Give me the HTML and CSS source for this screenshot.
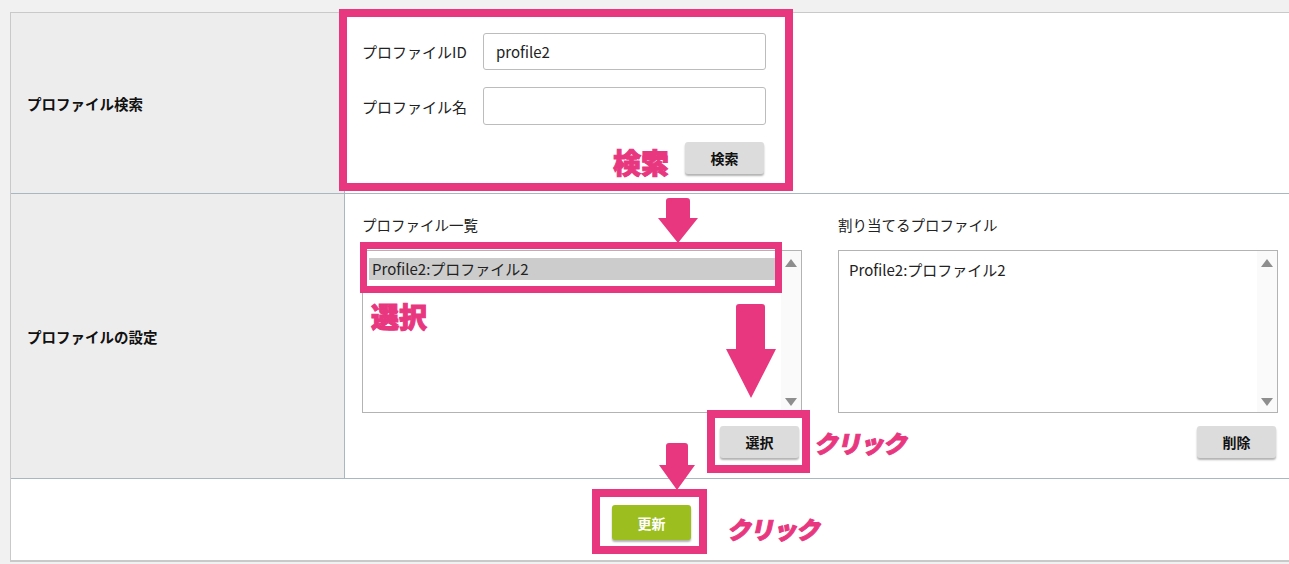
FILE: index.html
```html
<!DOCTYPE html>
<html lang="ja">

<head>
    <meta charset="UTF-8">
    <meta name="viewport" content="width=device-width, initial-scale=1.0">
    <title>プロファイルの設定</title>
    <link rel="stylesheet" href="styles.css">
</head>

<body>
    <div class="form">
        <!-- プロファイル検索 -->
        <div class="row row-search">
            <div class="th">プロファイル検索</div>
            <div class="td">
                <div class="field">
                    <label>プロファイルID</label>
                    <div class="input">profile2</div>
                </div>
                <div class="field">
                    <label>プロファイル名</label>
                    <div class="input"></div>
                </div>
                <div class="actions">
                    <button class="btn">検索</button>
                </div>
            </div>
        </div>
        <!-- プロファイルの設定 -->
        <div class="row row-setting">
            <div class="th">プロファイルの設定</div>
            <div class="td lists">
                <div class="col">
                    <div class="caption">プロファイル一覧</div>
                    <div class="listbox">
                        <ul class="items">
                            <li class="selected">Profile2:プロファイル2</li>
                        </ul>
                        <div class="scroll"><span class="up"></span><span class="down"></span></div>
                    </div>
                    <div class="actions">
                        <button class="btn">選択</button>
                    </div>
                </div>
                <div class="col">
                    <div class="caption">割り当てるプロファイル</div>
                    <div class="listbox">
                        <ul class="items">
                            <li>Profile2:プロファイル2</li>
                        </ul>
                        <div class="scroll"><span class="up"></span><span class="down"></span></div>
                    </div>
                    <div class="actions">
                        <button class="btn">削除</button>
                    </div>
                </div>
            </div>
        </div>
        <!-- 更新 -->
        <div class="row row-submit">
            <button class="btn btn-update">更新</button>
        </div>
    </div>

    <!-- 注釈 -->
    <div class="mark box-search"></div>
    <div class="mark box-item"></div>
    <div class="mark box-select"></div>
    <div class="mark box-update"></div>

    <div class="note note-search">検索</div>
    <div class="note note-select">選択</div>
    <div class="note note-click1">クリック</div>
    <div class="note note-click2">クリック</div>

    <svg class="arrow arrow1" width="44" height="46" viewBox="0 0 44 46">
        <path d="M10 3 Q10 0 13 0 H31 Q34 0 34 3 V20 H42 L22 45 L2 20 H10 Z" fill="#e8377f"/>
    </svg>
    <svg class="arrow arrow2" width="54" height="96" viewBox="0 0 54 96">
        <path d="M12 3 Q12 0 15 0 H38 Q41 0 41 3 V45 H52 L27 94 L2 45 H12 Z" fill="#e8377f"/>
    </svg>
    <svg class="arrow arrow3" width="38" height="48" viewBox="0 0 38 48">
        <path d="M8 3 Q8 0 11 0 H27 Q30 0 30 3 V22 H37 L19 47 L1 22 H8 Z" fill="#e8377f"/>
    </svg>
</body>

</html>
```

FILE: styles.css
```css
* {
    margin: 0;
    padding: 0;
    box-sizing: border-box;
}

ul,
li {
    list-style: none;
}

body {
    position: relative;
    background-color: #f1f1f1;
    font-family: "Noto Sans CJK JP", "Noto Sans", sans-serif;
    font-size: 14px;
    color: #222;
    overflow: hidden;
    height: 564px;
}

.form {
    margin: 12px 0 0 10px;
    width: 1290px;
    background-color: #fff;
    border: 1px solid #c9c9c9;
    border-right: none;
}

.row {
    display: grid;
    grid-template-columns: 334px 1fr;
    border-bottom: 1px solid #a9b7c3;
}

.th {
    background-color: #ededed;
    border-right: 1px solid #a9b7c3;
    display: flex;
    align-items: center;
    padding-left: 16px;
    font-size: 14.5px;
    font-weight: bold;
    color: #111;
}

.td {
    padding-left: 17px;
}

/* 検索 */
.row-search {
    height: 181px;
}

.row-search .td {
    padding-top: 20px;
    width: 421px;
}

.field {
    display: flex;
    align-items: center;
    margin-bottom: 17px;
}

.field label {
    width: 121px;
    font-size: 15px;
    color: #222;
}

.input {
    width: 283px;
    height: 37px;
    border: 1px solid #bcbcbc;
    border-radius: 3px;
    padding: 0 12px;
    line-height: 35px;
    font-size: 15px;
    color: #222;
}

.field + .field .input {
    height: 38px;
}

.actions {
    display: flex;
    justify-content: flex-end;
}

.btn {
    width: 79px;
    height: 32px;
    border: none;
    border-radius: 3px;
    background-color: #dcdcdc;
    box-shadow: 0 2px 2px rgba(0, 0, 0, 0.3);
    font-family: inherit;
    font-size: 14px;
    font-weight: bold;
    color: #111;
}

.row-search .actions {
    margin-right: 2px;
}

/* 設定 */
.row-setting {
    height: 285px;
}

.lists {
    display: grid;
    grid-template-columns: 440px 440px;
    column-gap: 36px;
    padding-top: 19px;
}

.caption {
    height: 24px;
    line-height: 24px;
    font-size: 14.5px;
    color: #222;
}

.lists .caption {
    margin-bottom: 13px;
}

.listbox {
    height: 163px;
    border: 1px solid #b3b3b3;
    display: flex;
}

.items {
    flex: 1;
    padding: 7px 6px;
}

.items li {
    height: 22px;
    line-height: 22px;
    padding-left: 3px;
    font-size: 15px;
    color: #222;
}

.items li.selected {
    background-color: #cccccc;
}

.lists .col:last-child .items li {
    padding-left: 4px;
    padding-top: 1px;
}

.scroll {
    width: 20px;
    background-color: #fafafa;
    display: flex;
    flex-direction: column;
    justify-content: space-between;
    align-items: center;
    padding: 8px 0 6px;
}

.scroll span {
    width: 0;
    height: 0;
    border-left: 6px solid transparent;
    border-right: 6px solid transparent;
}

.scroll .up {
    border-bottom: 8px solid #8e8e8e;
}

.scroll .down {
    border-top: 8px solid #8e8e8e;
}

.lists .actions {
    margin-top: 13px;
    margin-right: 3px;
}

.lists .col:last-child .actions {
    margin-right: 2px;
}

/* 更新 */
.row-submit {
    display: flex;
    justify-content: center;
    align-items: center;
    height: 82px;
    border-bottom: 1px solid #c9c9c9;
    padding: 6px 8px 0 0;
}

.btn-update {
    height: 35px;
    background-color: #9cbe1f;
    color: #fff;
    font-size: 14px;
}

/* 注釈（スクリーンショット上の書き込み） */
.mark {
    position: absolute;
    border: 8px solid #e8377f;
}

.box-search {
    left: 339px;
    top: 9px;
    width: 454px;
    height: 182px;
}

.box-item {
    left: 360px;
    top: 242px;
    width: 422px;
    height: 51px;
    border-width: 7px;
}

.box-select {
    left: 707px;
    top: 410px;
    width: 103px;
    height: 63px;
}

.box-update {
    left: 592px;
    top: 489px;
    width: 115px;
    height: 65px;
}

.note {
    position: absolute;
    color: #e8377f;
    font-weight: 900;
    white-space: nowrap;
}

.note-search {
    left: 613px;
    top: 142px;
    font-size: 28px;
    line-height: 40px;
    -webkit-text-stroke: 1px #e8377f;
}

.note-select {
    left: 371px;
    top: 296px;
    font-size: 28px;
    line-height: 40px;
    -webkit-text-stroke: 1px #e8377f;
}

.note-click1,
.note-click2 {
    font-size: 24px;
    line-height: 32px;
    letter-spacing: -1px;
    transform: skewX(-12deg);
    -webkit-text-stroke: 1px #e8377f;
}

.note-click1 {
    left: 816px;
    top: 427px;
}

.note-click2 {
    left: 729px;
    top: 513px;
}

.arrow {
    position: absolute;
}

.arrow1 {
    left: 656px;
    top: 198px;
}

.arrow2 {
    left: 724px;
    top: 304px;
}

.arrow3 {
    left: 658px;
    top: 443px;
}
```
